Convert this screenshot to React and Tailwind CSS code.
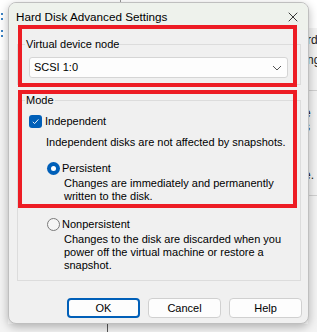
import React from 'react';
import { FiX } from 'react-icons/fi';

const font = { fontFamily: '"Liberation Sans", Arial, sans-serif' };

const Radio = ({ checked }) =>
  checked ? (
    <span className="w-[13px] h-[13px] rounded-full bg-[#005fb8] flex items-center justify-center shrink-0">
      <span className="w-[5px] h-[5px] rounded-full bg-white" />
    </span>
  ) : (
    <span className="w-[13px] h-[13px] rounded-full border border-[#7a7a7a] bg-[#f5f5f5] shrink-0" />
  );

const Button = ({ children, primary }) => (
  <button
    className={
      primary
        ? 'w-[73px] h-[20px] rounded-[4px] border-2 border-[#005fb8] bg-[#fdfdfd] text-[11px] leading-none text-black'
        : 'w-[73px] h-[20px] rounded-[4px] border border-[#d0d0d0] bg-[#fdfdfd] text-[11px] leading-none text-black'
    }
  >
    {children}
  </button>
);

const App = () => {
  return (
    <div className="relative w-[317px] h-[332px] overflow-hidden bg-white" style={font}>
      {/* stuff behind the dialog */}
      <div className="absolute left-[1px] top-[13px] w-[2px] h-[7px] border-l-2 border-dotted border-[#3b82c4]" />
      <div className="absolute left-[1px] top-[30px] w-[2px] h-[7px] border-l-2 border-dotted border-[#3b82c4]" />
      <div className="absolute left-[120px] top-0 w-px h-[3px] bg-[#999]" />
      <div className="absolute left-[0px] top-[60px] w-[8px] h-[272px] bg-[#f3f3f3]" />
      <div className="absolute left-[0px] top-[324px] w-[317px] h-[8px] bg-[#f3f3f3]" />
      <div className="absolute left-[107px] top-[322px] w-px h-[10px] bg-[#555]" />
      <div className="absolute left-[308px] top-[28px] w-[9px] h-[304px] bg-[#f3f3f3]" />
      <div className="absolute left-[308px] top-[90px] w-[9px] h-px bg-[#d0d0d0]" />
      <div className="absolute left-[308px] top-[195px] w-[9px] h-px bg-[#d0d0d0]" />
      <div className="absolute left-[307px] top-[33px] text-[12px] leading-[14px] text-[#222]">rd</div>
      <div className="absolute left-[307px] top-[53px] text-[12px] leading-[14px] text-[#222]">ng</div>
      <div className="absolute left-[304px] top-[106px] text-[12px] leading-[14px] text-[#222]">e s</div>
      <div className="absolute left-[304px] top-[168px] text-[12px] leading-[14px] text-[#222]">e.</div>

      {/* dialog window */}
      <div className="absolute left-[8px] top-[2px] w-[301px] h-[322px] rounded-[8px] border border-[#bfbfbf] bg-[#f0f0f0] shadow-[0_3px_10px_rgba(0,0,0,0.28)] overflow-hidden flex flex-col text-black text-[11px] leading-[13px]">
        <div className="h-[27px] shrink-0 bg-[#eef2ec] flex items-center justify-between pl-[7px] pr-[7px]">
          <span className="text-[11.7px] leading-[14px] whitespace-nowrap">Hard Disk Advanced Settings</span>
          <FiX className="w-[16px] h-[16px] text-[#1a1a1a]" strokeWidth={1.3} />
        </div>

        <div className="flex flex-col pl-[8px] pr-[7px]">
          <fieldset className="mt-[7px] border border-[#dcdcdc] pl-[7px] pr-[8px] pb-[6px]">
            <legend className="px-[1px] leading-[14px] whitespace-nowrap">Virtual device node</legend>
            <div className="mt-[6px] ml-[4px] w-[259px] h-[21px] rounded-[3px] border border-[#d5d5d5] bg-[#fdfdfd] flex items-center justify-between pl-[4px] pr-[5px]">
              <span>SCSI 1:0</span>
              <svg width="10" height="6" viewBox="0 0 10 6" fill="none">
                <path d="M1 1 L5 5 L9 1" stroke="#555" strokeWidth="1" />
              </svg>
            </div>
          </fieldset>

          <fieldset className="mt-[8px] border border-[#dcdcdc] pl-[11px] pr-[6px] pb-[8px] whitespace-nowrap">
            <legend className="ml-[-4px] px-[1px] leading-[14px]">Mode</legend>
            <div className="flex items-center gap-[3px] mt-[7px] h-[14px]">
              <span className="w-[13px] h-[13px] rounded-[3px] bg-[#005fb8] flex items-center justify-center">
                <svg width="9" height="9" viewBox="0 0 9 9" fill="none">
                  <path d="M1.8 4.8 L3.6 6.6 L7.4 2.4" stroke="white" strokeWidth="0.9" />
                </svg>
              </span>
              <span>Independent</span>
            </div>
            <div className="mt-[8px] ml-[17px]">Independent disks are not affected by snapshots.</div>

            <div className="ml-[18px] mt-[12px] h-[14px] flex items-center gap-[2px]">
              <Radio checked />
              <span>Persistent</span>
            </div>
            <div className="ml-[35px] mt-[2px]">
              Changes are immediately and permanently
              <br />
              written to the disk.
            </div>

            <div className="ml-[18px] mt-[14px] h-[14px] flex items-center gap-[2px]">
              <Radio />
              <span>Nonpersistent</span>
            </div>
            <div className="ml-[35px] mt-[2px]">
              Changes to the disk are discarded when you
              <br />
              power off the virtual machine or restore a
              <br />
              snapshot.
            </div>
          </fieldset>

          <div className="mt-[17px] flex justify-end gap-[8px] mr-[-1px]">
            <Button primary>OK</Button>
            <Button>Cancel</Button>
            <Button>Help</Button>
          </div>
        </div>
      </div>

      {/* red annotation boxes */}
      <div className="absolute left-[18px] top-[25px] w-[279px] h-[62px] border-[4px] border-[#ed1c24]" />
      <div className="absolute left-[18px] top-[90px] w-[279px] h-[118px] border-[4px] border-[#ed1c24]" />
    </div>
  );
};

export default App;
